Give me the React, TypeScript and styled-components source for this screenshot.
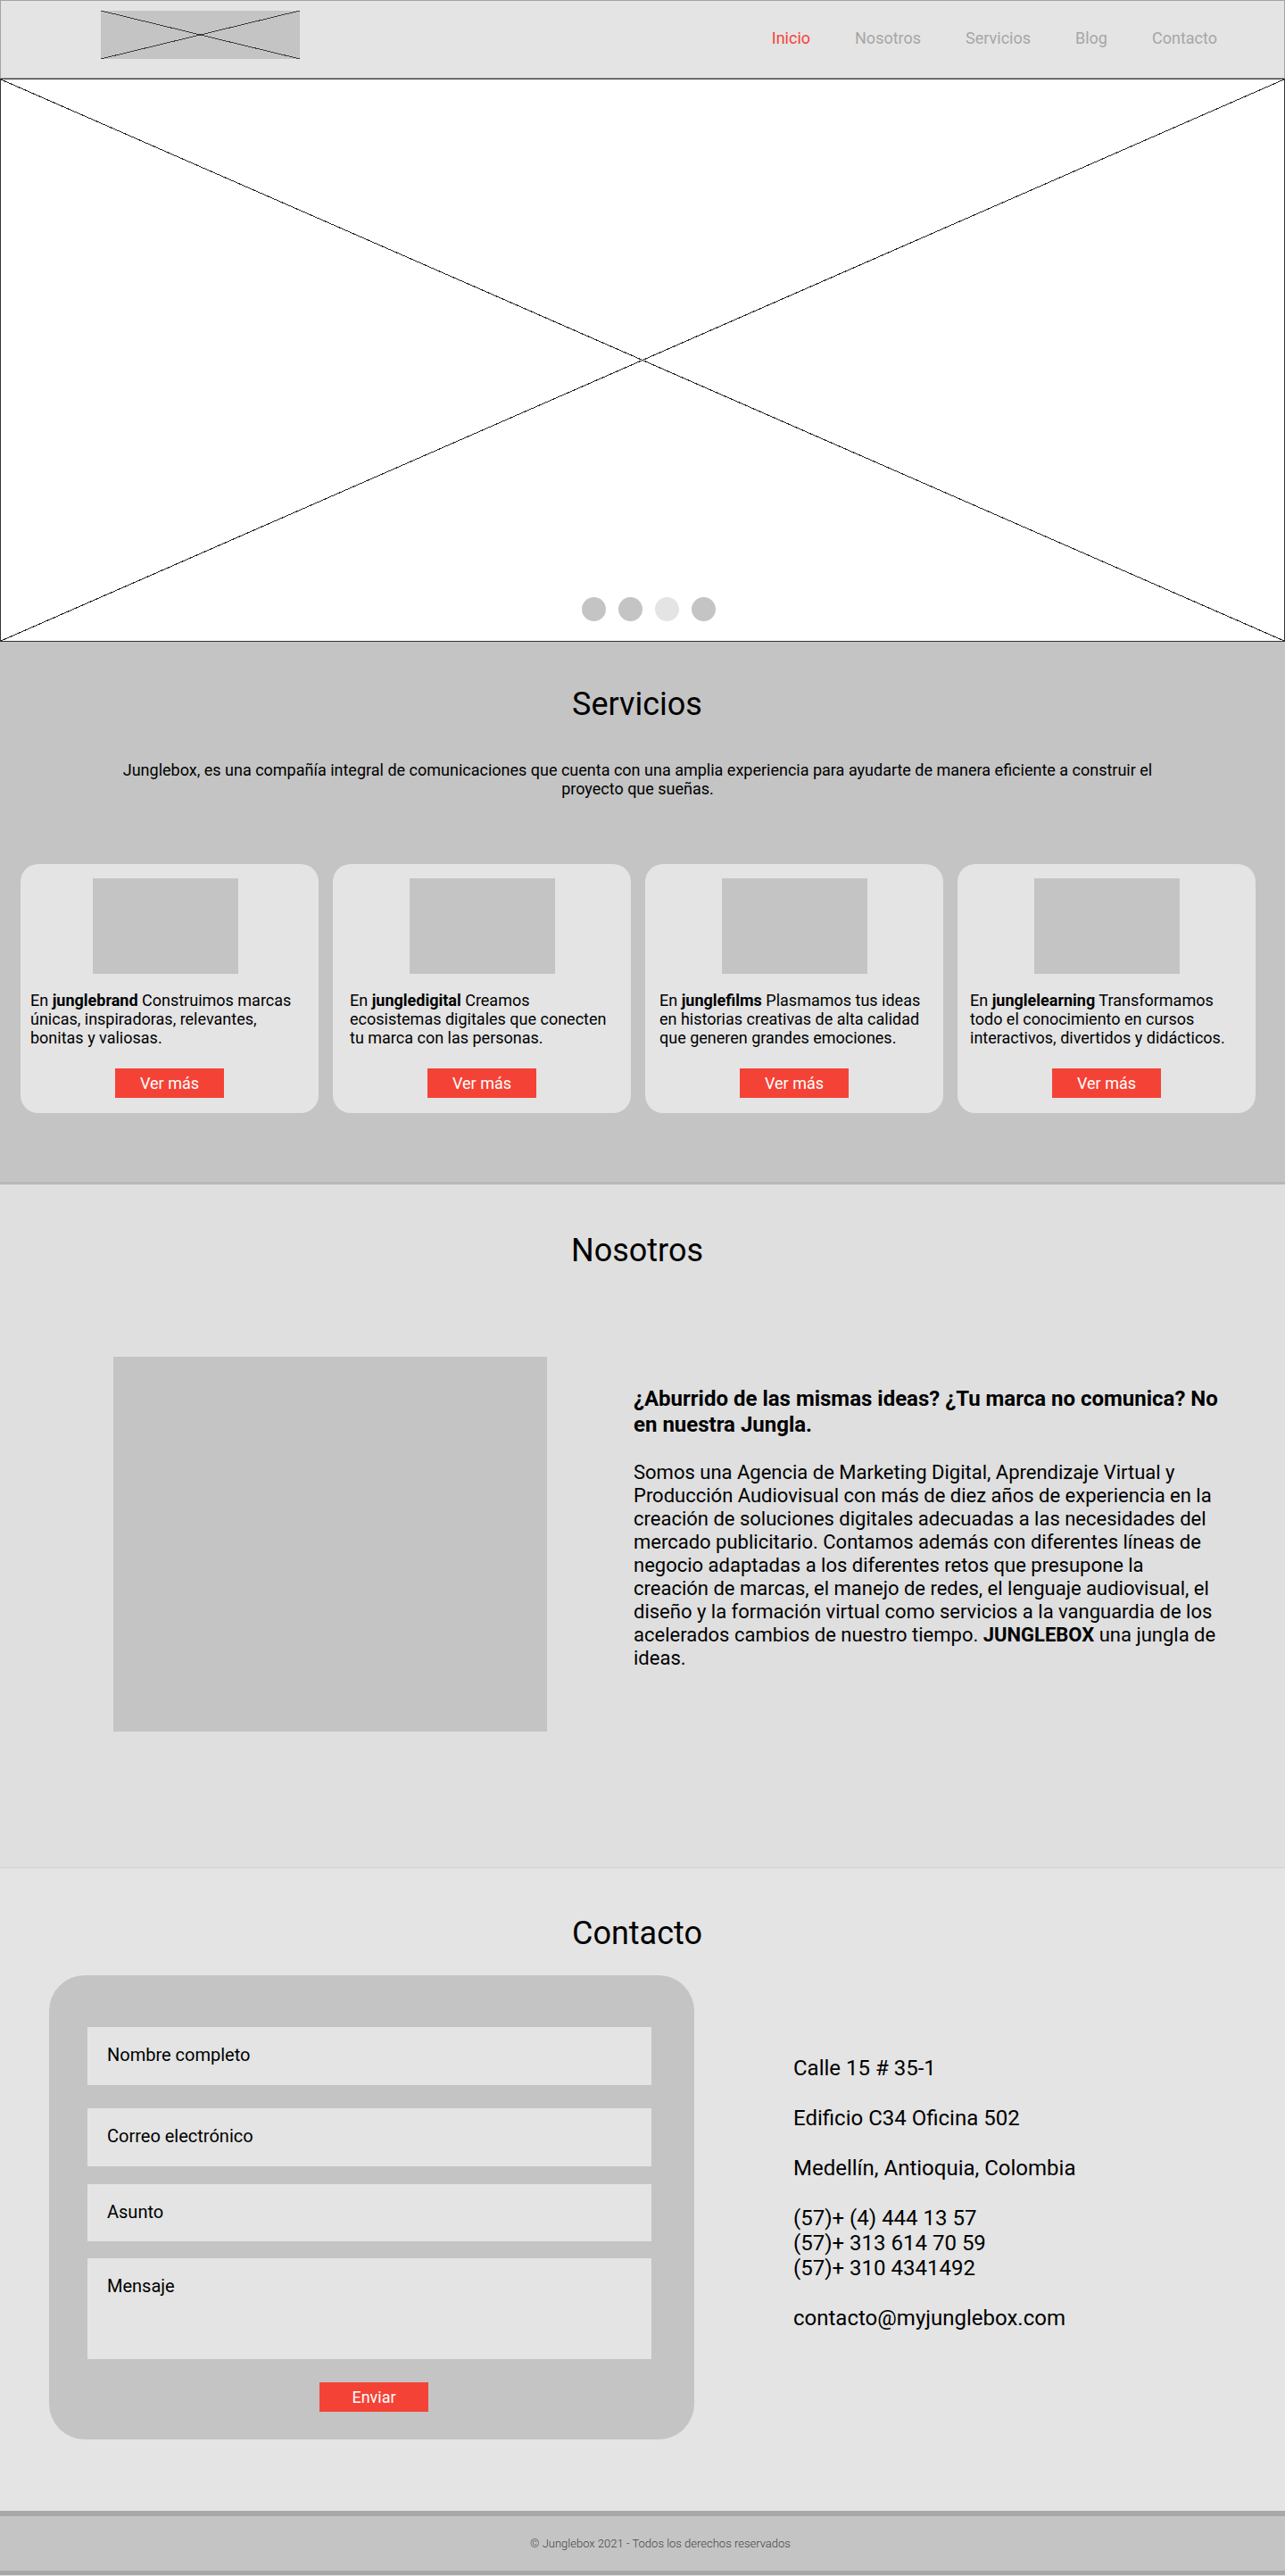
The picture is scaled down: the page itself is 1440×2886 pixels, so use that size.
import React from "react";
import styled, { createGlobalStyle } from "styled-components";

const GlobalStyle = createGlobalStyle`
  * { box-sizing: border-box; }
  body {
    margin: 0;
    font-family: Roboto, "Liberation Sans", Arial, sans-serif;
    color: #000;
    background: #e4e4e4;
  }
`;

const RED = "#f44336";

const Page = styled.div`
  width: 1440px;
  display: flex;
  flex-direction: column;
`;

/* ---------- Header ---------- */
const Header = styled.header`
  height: 88px;
  background: #e4e4e4;
  border: 1px solid #a3a3a3;
  display: flex;
  align-items: flex-start;
  justify-content: space-between;
  padding: 11px 75px 0 112px;
`;

const Logo = styled.div`
  width: 223px;
  height: 54px;
  background: #c4c4c4;
  position: relative;
  svg {
    position: absolute;
    inset: 0;
  }
`;

const Nav = styled.nav`
  display: flex;
  gap: 50px;
  margin-top: 20px;
`;

const NavLink = styled.a<{ $active?: boolean }>`
  font-size: 18px;
  line-height: 21px;
  color: ${(p) => (p.$active ? RED : "#a6a6a6")};
  text-decoration: none;
`;

/* ---------- Hero ---------- */
const Hero = styled.section`
  height: 631px;
  background: #fff;
  border: 1px solid #333;
  position: relative;
  svg.cross {
    position: absolute;
    inset: 0;
    width: 100%;
    height: 100%;
  }
`;

const Dots = styled.div`
  position: absolute;
  bottom: 22px;
  left: calc(50% + 7px);
  transform: translateX(-50%);
  display: flex;
  gap: 14px;
`;

const Dot = styled.span<{ $light?: boolean }>`
  width: 27px;
  height: 27px;
  border-radius: 50%;
  background: ${(p) => (p.$light ? "#e4e4e4" : "#c4c4c4")};
`;

/* ---------- Sections ---------- */
const Section = styled.section<{ $bg: string }>`
  background: ${(p) => p.$bg};
  display: flex;
  flex-direction: column;
  align-items: center;
`;

const ServicesSection = styled(Section)`
  padding: 49px 0 77px;
  border-bottom: 3px solid #b8b8b8;
`;

const AboutSection = styled(Section)`
  padding: 53px 0 152px;
  border-bottom: 1px solid #d0d0d0;
`;

const ContactSection = styled(Section)`
  padding: 52px 0 80px;
`;

const Title = styled.h2`
  margin: 0;
  font-size: 36px;
  line-height: 42px;
  font-weight: 400;
  margin-left: -12px;
`;

const Intro = styled.p`
  margin: 42px 0 0 -11px;
  width: 1180px;
  text-align: center;
  font-size: 18px;
  line-height: 21px;
`;

const Cards = styled.div`
  align-self: stretch;
  margin-top: 74px;
  padding-left: 23px;
  display: grid;
  grid-template-columns: repeat(4, 334px);
  gap: 16px;
`;

const Card = styled.div`
  height: 279px;
  background: #e4e4e4;
  border-radius: 20px;
  padding: 16px 0 17px;
  display: flex;
  flex-direction: column;
`;

const CardImage = styled.div<{ $shift: number }>`
  width: 163px;
  height: 107px;
  background: #c4c4c4;
  align-self: center;
  flex-shrink: 0;
  transform: translateX(${(p) => p.$shift}px);
`;

const CardText = styled.p<{ $padLeft: number }>`
  margin: 19px 0 0;
  padding: 0 10px 0 ${(p) => p.$padLeft}px;
  font-size: 18px;
  line-height: 21px;
`;

const RedButton = styled.button`
  width: 122px;
  height: 33px;
  background: ${RED};
  border: none;
  color: #fff;
  font-family: inherit;
  font-size: 18px;
  padding: 0;
  align-self: center;
`;

const CardButton = styled(RedButton)`
  margin-top: auto;
`;

/* About */
const AboutRow = styled.div`
  align-self: stretch;
  margin-top: 98px;
  padding-left: 127px;
  display: flex;
  gap: 97px;
`;

const AboutImage = styled.div`
  width: 486px;
  height: 420px;
  background: #c4c4c4;
  flex-shrink: 0;
`;

const AboutText = styled.div`
  width: 668px;
  padding-top: 33px;
`;

const AboutHeading = styled.h3`
  margin: 0;
  font-size: 24px;
  line-height: 29px;
  font-weight: 700;
`;

const AboutBody = styled.p`
  margin: 26px 0 0;
  width: 657px;
  font-size: 22px;
  line-height: 26px;
`;

/* Contact */
const ContactRow = styled.div`
  align-self: stretch;
  margin-top: 26px;
  padding-left: 55px;
  display: flex;
  gap: 111px;
`;

const Form = styled.form`
  width: 723px;
  height: 520px;
  background: #c4c4c4;
  border-radius: 40px;
  padding: 58px 48px 31px 43px;
  display: flex;
  flex-direction: column;
`;

const Field = styled.div<{ $tall?: boolean; $gap: number }>`
  height: ${(p) => (p.$tall ? 113 : 65)}px;
  margin-top: ${(p) => p.$gap}px;
  background: #e4e4e4;
  padding: 20px 22px 0;
  font-size: 20px;
  line-height: 22px;
`;

const SendButton = styled(RedButton)`
  margin-top: 26px;
  margin-left: 10px;
`;

const Info = styled.div`
  padding-top: 90px;
  font-size: 24px;
  line-height: 28px;
  display: flex;
  flex-direction: column;
  gap: 28px;
`;

const InfoBlock = styled.p`
  margin: 0;
`;

/* Footer */
const Footer = styled.footer`
  height: 72px;
  background: #c4c4c4;
  border-top: 6px solid #a8a8a8;
  border-bottom: 5px solid #a8a8a8;
  display: flex;
  align-items: center;
  justify-content: center;
  padding-left: 40px;
  font-size: 13px;
  font-weight: 300;
  color: #444;
`;

const Cross = ({ stroke, className }: { stroke: string; className?: string }) => (
  <svg
    className={className}
    viewBox="0 0 100 100"
    preserveAspectRatio="none"
    width="100%"
    height="100%"
    shapeRendering="crispEdges"
  >
    <line x1="0" y1="0" x2="100" y2="100" stroke={stroke} strokeWidth="1" vectorEffect="non-scaling-stroke" />
    <line x1="100" y1="0" x2="0" y2="100" stroke={stroke} strokeWidth="1" vectorEffect="non-scaling-stroke" />
  </svg>
);

const services = [
  { name: "junglebrand", pad: 11, shift: -5, text: "Construimos marcas únicas, inspiradoras, relevantes, bonitas y valiosas." },
  { name: "jungledigital", pad: 19, shift: 0, text: "Creamos ecosistemas digitales que conecten tu marca con las personas." },
  { name: "junglefilms", pad: 16, shift: 0, text: "Plasmamos tus ideas en historias creativas de alta calidad que generen grandes emociones." },
  { name: "junglelearning", pad: 14, shift: 0, text: "Transformamos todo el conocimiento en cursos interactivos, divertidos y didácticos." },
];

export default function App() {
  return (
    <Page>
      <GlobalStyle />
      <Header>
        <Logo>
          <Cross stroke="#3a3a3a" />
        </Logo>
        <Nav>
          <NavLink $active href="#">Inicio</NavLink>
          <NavLink href="#">Nosotros</NavLink>
          <NavLink href="#">Servicios</NavLink>
          <NavLink href="#">Blog</NavLink>
          <NavLink href="#">Contacto</NavLink>
        </Nav>
      </Header>

      <Hero>
        <Cross className="cross" stroke="#222" />
        <Dots>
          <Dot />
          <Dot />
          <Dot $light />
          <Dot />
        </Dots>
      </Hero>

      <ServicesSection $bg="#c4c4c4">
        <Title>Servicios</Title>
        <Intro>
          Junglebox, es una compañía integral de comunicaciones que cuenta con una amplia experiencia para ayudarte de manera eficiente a construir el proyecto que sueñas.
        </Intro>
        <Cards>
          {services.map((s) => (
            <Card key={s.name}>
              <CardImage $shift={s.shift} />
              <CardText $padLeft={s.pad}>
                En <b>{s.name}</b> {s.text}
              </CardText>
              <CardButton>Ver más</CardButton>
            </Card>
          ))}
        </Cards>
      </ServicesSection>

      <AboutSection $bg="#dfdfdf">
        <Title>Nosotros</Title>
        <AboutRow>
          <AboutImage />
          <AboutText>
            <AboutHeading>¿Aburrido de las mismas ideas? ¿Tu marca no comunica? No en nuestra Jungla.</AboutHeading>
            <AboutBody>
              Somos una Agencia de Marketing Digital, Aprendizaje Virtual y Producción Audiovisual con más de diez años de experiencia en la creación de soluciones digitales adecuadas a las necesidades del mercado publicitario. Contamos además con diferentes líneas de negocio adaptadas a los diferentes retos que presupone la creación de marcas, el manejo de redes, el lenguaje audiovisual, el diseño y la formación virtual como servicios a la vanguardia de los acelerados cambios de nuestro tiempo. <b>JUNGLEBOX</b> una jungla de ideas.
            </AboutBody>
          </AboutText>
        </AboutRow>
      </AboutSection>

      <ContactSection $bg="#e4e4e4">
        <Title>Contacto</Title>
        <ContactRow>
          <Form>
            <Field $gap={0}>Nombre completo</Field>
            <Field $gap={26}>Correo electrónico</Field>
            <Field $gap={20}>Asunto</Field>
            <Field $gap={19} $tall>Mensaje</Field>
            <SendButton type="button">Enviar</SendButton>
          </Form>
          <Info>
            <InfoBlock>Calle 15 # 35-1</InfoBlock>
            <InfoBlock>Edificio C34 Oficina 502</InfoBlock>
            <InfoBlock>Medellín, Antioquia, Colombia</InfoBlock>
            <InfoBlock>
              (57)+ (4) 444 13 57
              <br />
              (57)+ 313 614 70 59
              <br />
              (57)+ 310 4341492
            </InfoBlock>
            <InfoBlock>contacto@myjunglebox.com</InfoBlock>
          </Info>
        </ContactRow>
      </ContactSection>

      <Footer>© Junglebox 2021 - Todos los derechos reservados</Footer>
    </Page>
  );
}
